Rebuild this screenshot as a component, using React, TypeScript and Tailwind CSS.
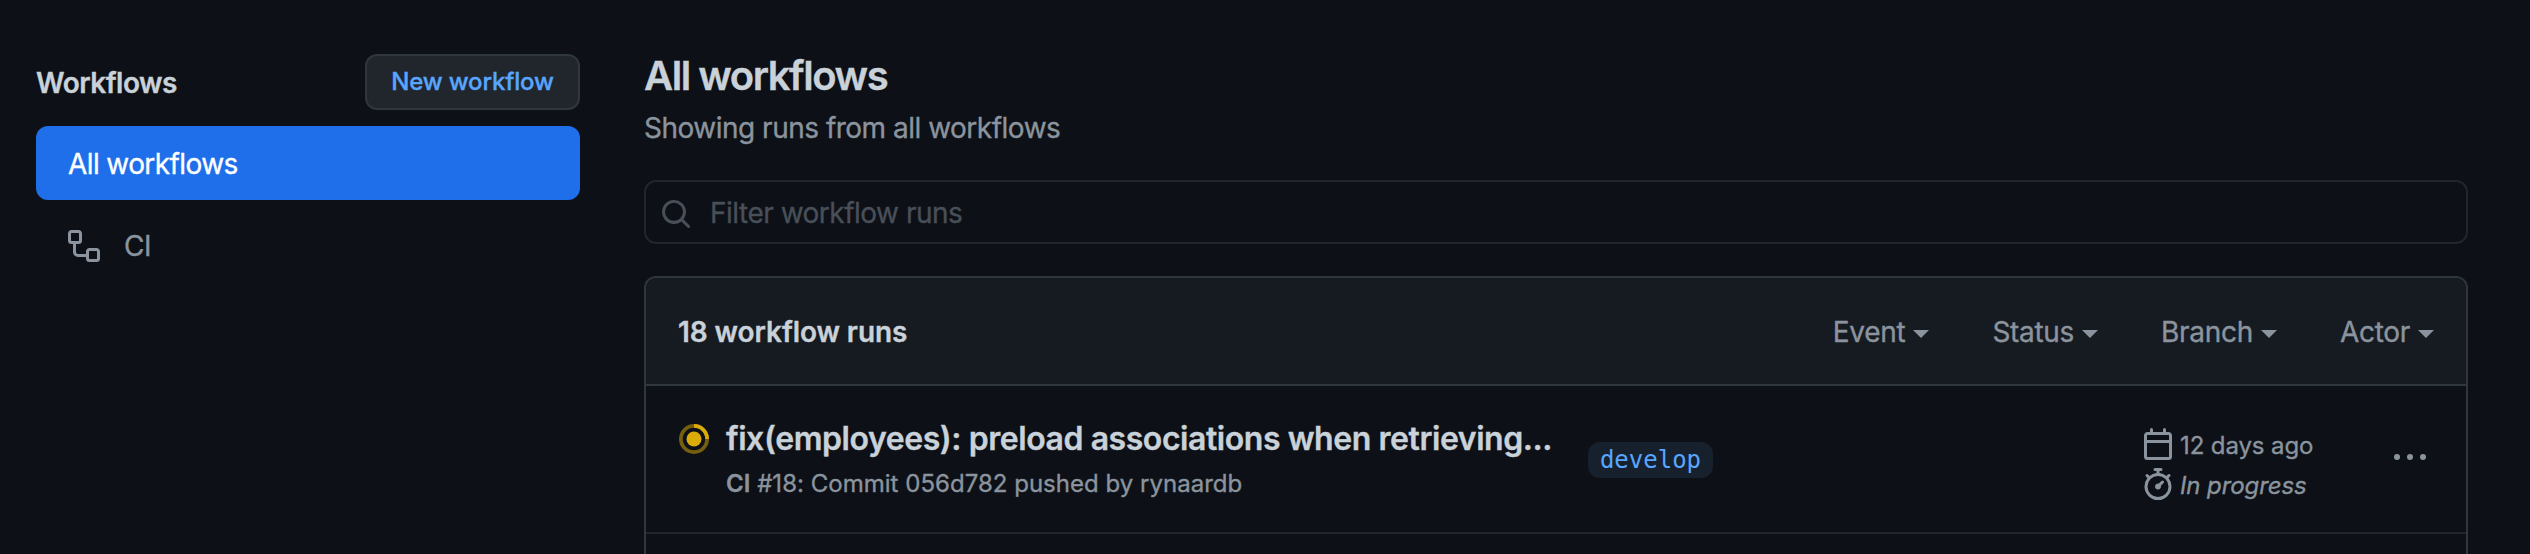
const filters = ["Event", "Status", "Branch", "Actor"];

function Icon({ d, className }: { d: string; className: string }) {
  return (
    <svg viewBox="0 0 16 16" fill="currentColor" className={className}>
      <path d={d} />
    </svg>
  );
}

const workflowPath =
  "M0 1.75C0 .784.784 0 1.75 0h3.5C6.216 0 7 .784 7 1.75v3.5A1.75 1.75 0 0 1 5.25 7H4v4a1 1 0 0 0 1 1h4v-1.25C9 9.784 9.784 9 10.75 9h3.5c.966 0 1.75.784 1.75 1.75v3.5A1.75 1.75 0 0 1 14.25 16h-3.5A1.75 1.75 0 0 1 9 14.25v-.75H5A2.5 2.5 0 0 1 2.5 11V7h-.75A1.75 1.75 0 0 1 0 5.25Zm1.75-.25a.25.25 0 0 0-.25.25v3.5c0 .138.112.25.25.25h3.5a.25.25 0 0 0 .25-.25v-3.5a.25.25 0 0 0-.25-.25Zm9 9a.25.25 0 0 0-.25.25v3.5c0 .138.112.25.25.25h3.5a.25.25 0 0 0 .25-.25v-3.5a.25.25 0 0 0-.25-.25Z";
const searchPath =
  "M10.68 11.74a6 6 0 0 1-7.922-8.982 6 6 0 0 1 8.982 7.922l3.04 3.04a.749.749 0 0 1-.326 1.275.749.749 0 0 1-.734-.215ZM11.5 7a4.499 4.499 0 1 0-8.997 0A4.499 4.499 0 0 0 11.5 7Z";
const calendarPath =
  "M4.75 0a.75.75 0 0 1 .75.75V2h5V.75a.75.75 0 0 1 1.5 0V2h1.25c.966 0 1.75.784 1.75 1.75v10.5A1.75 1.75 0 0 1 13.25 16H2.75A1.75 1.75 0 0 1 1 14.25V3.75C1 2.784 1.784 2 2.75 2H4V.75A.75.75 0 0 1 4.75 0ZM2.5 7.5v6.75c0 .138.112.25.25.25h10.5a.25.25 0 0 0 .25-.25V7.5Zm10.75-4H2.75a.25.25 0 0 0-.25.25V6h11V3.75a.25.25 0 0 0-.25-.25Z";
const stopwatchPath =
  "M5.75.75A.75.75 0 0 1 6.5 0h3a.75.75 0 0 1 0 1.5h-.75v1l-.001.041a6.724 6.724 0 0 1 3.464 1.435l.007-.006.75-.75a.749.749 0 0 1 1.275.326.749.749 0 0 1-.215.734l-.75.75-.006.007a6.75 6.75 0 1 1-10.548 0L2.72 5.03l-.75-.75a.751.751 0 0 1 .018-1.042.751.751 0 0 1 1.042-.018l.75.75.007.006A6.72 6.72 0 0 1 7.25 2.541V1.5H6.5a.75.75 0 0 1-.75-.75ZM8 14.5a5.25 5.25 0 1 0-.001-10.501A5.25 5.25 0 0 0 8 14.5Zm.389-6.7 1.33-1.33a.75.75 0 1 1 1.061 1.06L9.45 8.861A1.503 1.503 0 0 1 8 10.75a1.499 1.499 0 1 1 .389-2.95Z";

export default function App() {
  return (
    <div className="flex h-[554px] w-[2530px] overflow-hidden bg-[#0d1117] pl-9 font-['Inter','Liberation_Sans',sans-serif] text-[28px] leading-[42px] text-[#c9d1d9] [-webkit-text-stroke:0.35px]">
      <aside className="w-[544px] pt-[54px]">
        <div className="flex h-14 items-center justify-between">
          <h2 className="pt-[2px] font-semibold tracking-[-0.5px]">Workflows</h2>
          <button className="flex h-14 w-[215px] items-center justify-center rounded-xl border-2 border-[#30363d] bg-[#21262d] text-[24px] font-medium tracking-[-0.15px] text-[#58a6ff]">
            New workflow
          </button>
        </div>
        <nav className="mt-4">
          <a className="flex h-[74px] items-center rounded-xl bg-[#1f6feb] pt-[2px] pl-8 tracking-[-0.6px] text-white">All workflows</a>
          <a className="flex h-[92px] items-center gap-6 pl-8 text-[#8b949e]">
            <Icon d={workflowPath} className="size-8" />
            <span className="tracking-[-0.5px]">CI</span>
          </a>
        </nav>
      </aside>
      <main className="ml-16 w-[1824px] pt-[51px]">
        <h1 className="text-[40px] leading-[50px] font-semibold tracking-[-1.45px]">All workflows</h1>
        <p className="mt-[6px] tracking-[-0.5px] text-[#8b949e]">Showing runs from all workflows</p>
        <div className="mt-[31px] flex h-16 items-center rounded-xl border-2 border-[#21262d] pt-[2px] pl-[14px] text-[#484f58]">
          <Icon d={searchPath} className="mt-[2px] size-8" />
          <span className="ml-[18px] tracking-[-0.5px]">Filter workflow runs</span>
        </div>
        <section className="mt-8 h-[400px] rounded-xl border-2 border-[#30363d]">
          <header className="flex h-[108px] items-center justify-between rounded-t-[10px] border-b-2 border-[#30363d] bg-[#161b22] pt-[2px] pr-8 pl-8">
            <h3 className="font-semibold tracking-[-0.08px]">18 workflow runs</h3>
            <div className="flex gap-[63px] text-[#8b949e]">
              {filters.map((f) => (
                <button key={f} className="flex items-center gap-2">
                  <span className="tracking-[-0.3px]">{f}</span>
                  <svg viewBox="0 0 16 8" className="mt-1 h-2 w-4" fill="currentColor">
                    <path d="M0 0H16L8 8Z" />
                  </svg>
                </button>
              ))}
            </div>
          </header>
          <div className="flex h-[148px] border-b-2 border-[#21262d] pl-[33px]">
            <svg viewBox="0 0 16 16" fill="none" className="mt-[38px] size-[30px]">
              <circle cx="8" cy="8" r="7" stroke="#dbab0a" strokeOpacity="0.5" strokeWidth="2" />
              <path d="M8 1a7 7 0 0 1 7 7" stroke="#dbab0a" strokeWidth="2" />
              <circle cx="8" cy="8" r="4" fill="#dbab0a" />
            </svg>
            <div className="ml-[17px] w-[862px] pt-[33px]">
              <h4 className="text-[32px] leading-[40px] font-semibold tracking-[-0.44px] whitespace-nowrap">
                fix(employees): preload associations when retrieving...
              </h4>
              <p className="mt-[7px] text-[24px] leading-[36px] tracking-[0.02px] whitespace-nowrap text-[#8b949e]">
                <b className="font-semibold">CI</b> #18: Commit 056d782 pushed by rynaardb
              </p>
            </div>
            <div className="mt-14 flex h-9 w-[125px] items-center justify-center rounded-xl bg-[#17212e] font-['DejaVu_Sans_Mono',monospace] text-[24px] text-[#58a6ff] [-webkit-text-stroke:0]">
              develop
            </div>
            <div className="ml-[429px] w-[252px] pt-[38px] text-[24px] leading-10 text-[#8b949e]">
              <div className="flex h-10 items-center gap-[6px]">
                <Icon d={calendarPath} className="size-8" />
                <span className="pt-[3px] tracking-[-0.1px]">12 days ago</span>
              </div>
              <div className="flex h-10 items-center gap-[6px]">
                <Icon d={stopwatchPath} className="size-8" />
                <i className="pt-[3px] tracking-[-0.1px]">In progress</i>
              </div>
            </div>
            <svg viewBox="0 0 32 6" className="mt-[68px] h-[6px] w-8" fill="#8b949e">
              <circle cx="3" cy="3" r="3" />
              <circle cx="16" cy="3" r="3" />
              <circle cx="29" cy="3" r="3" />
            </svg>
          </div>
        </section>
      </main>
    </div>
  );
}
